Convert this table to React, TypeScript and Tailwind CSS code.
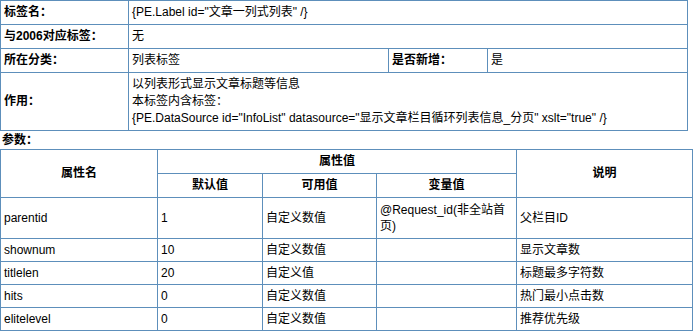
const td = 'border border-[#5d8fbb] px-[3px] py-[3px] align-middle';
const th = 'border border-[#5d8fbb] px-[3px] py-[3px] align-middle text-center font-bold';
const tdRow = 'border border-[#5d8fbb] px-[3px] py-[3px] align-middle leading-[16px]';

const params = [
  { name: 'parentid', def: '1', avail: '自定义数值', variable: 'parentid', desc: '父栏目ID' },
  { name: 'shownum', def: '10', avail: '自定义数值', variable: '', desc: '显示文章数' },
  { name: 'titlelen', def: '20', avail: '自定义值', variable: '', desc: '标题最多字符数' },
  { name: 'hits', def: '0', avail: '自定义数值', variable: '', desc: '热门最小点击数' },
  { name: 'elitelevel', def: '0', avail: '自定义数值', variable: '', desc: '推荐优先级' },
];

export default function App() {
  return (
    <div
      className="w-[693px] h-[331px] bg-white text-black text-[12px] leading-[17px] overflow-hidden"
      style={{ fontFamily: '"Liberation Sans", "Noto Sans CJK SC", sans-serif' }}
    >
      {/* tag info */}
      <table className="w-[687px] table-fixed border-collapse">
        <colgroup>
          <col className="w-[128px]" />
          <col className="w-[260px]" />
          <col className="w-[99px]" />
          <col className="w-[200px]" />
        </colgroup>
        <tbody>
          <tr>
            <td className={`${td} font-bold`}>标签名：</td>
            <td className={td} colSpan={3}>{'{PE.Label id="文章一列式列表" /}'}</td>
          </tr>
          <tr>
            <td className={`${td} font-bold`}>与2006对应标签：</td>
            <td className={td} colSpan={3}>无</td>
          </tr>
          <tr>
            <td className={`${td} font-bold`}>所在分类：</td>
            <td className={td}>列表标签</td>
            <td className={`${td} font-bold`}>是否新增：</td>
            <td className={td}>是</td>
          </tr>
          <tr>
            <td className={`${td} font-bold`}>作用：</td>
            <td className={td} colSpan={3}>
              以列表形式显示文章标题等信息
              <br />
              本标签内含标签：
              <br />
              {'{PE.DataSource id="InfoList" datasource="显示文章栏目循环列表信息_分页" xslt="true" /}'}
            </td>
          </tr>
        </tbody>
      </table>

      <div className="px-[2px] pt-[1px] font-bold">参数：</div>

      {/* params */}
      <table className="w-[692px] table-fixed border-collapse">
        <colgroup>
          <col className="w-[157px]" />
          <col className="w-[105px]" />
          <col className="w-[114px]" />
          <col className="w-[140px]" />
          <col className="w-[176px]" />
        </colgroup>
        <thead>
          <tr>
            <th className={th} rowSpan={2}>属性名</th>
            <th className={th} colSpan={3}>属性值</th>
            <th className={th} rowSpan={2}>说明</th>
          </tr>
          <tr>
            <th className={th}>默认值</th>
            <th className={th}>可用值</th>
            <th className={th}>变量值</th>
          </tr>
        </thead>
        <tbody>
          {params.map((p) => (
            <tr key={p.name} className={p.variable ? 'h-[41px]' : ''}>
              <td className={tdRow}>{p.name}</td>
              <td className={tdRow}>{p.def}</td>
              <td className={tdRow}>{p.avail}</td>
              <td className={tdRow}>
                {p.variable ? (
                  <>
                    @Request_id(非全站首
                    <br />
                    页)
                  </>
                ) : null}
              </td>
              <td className={tdRow}>{p.desc}</td>
            </tr>
          ))}
        </tbody>
      </table>
    </div>
  );
}
